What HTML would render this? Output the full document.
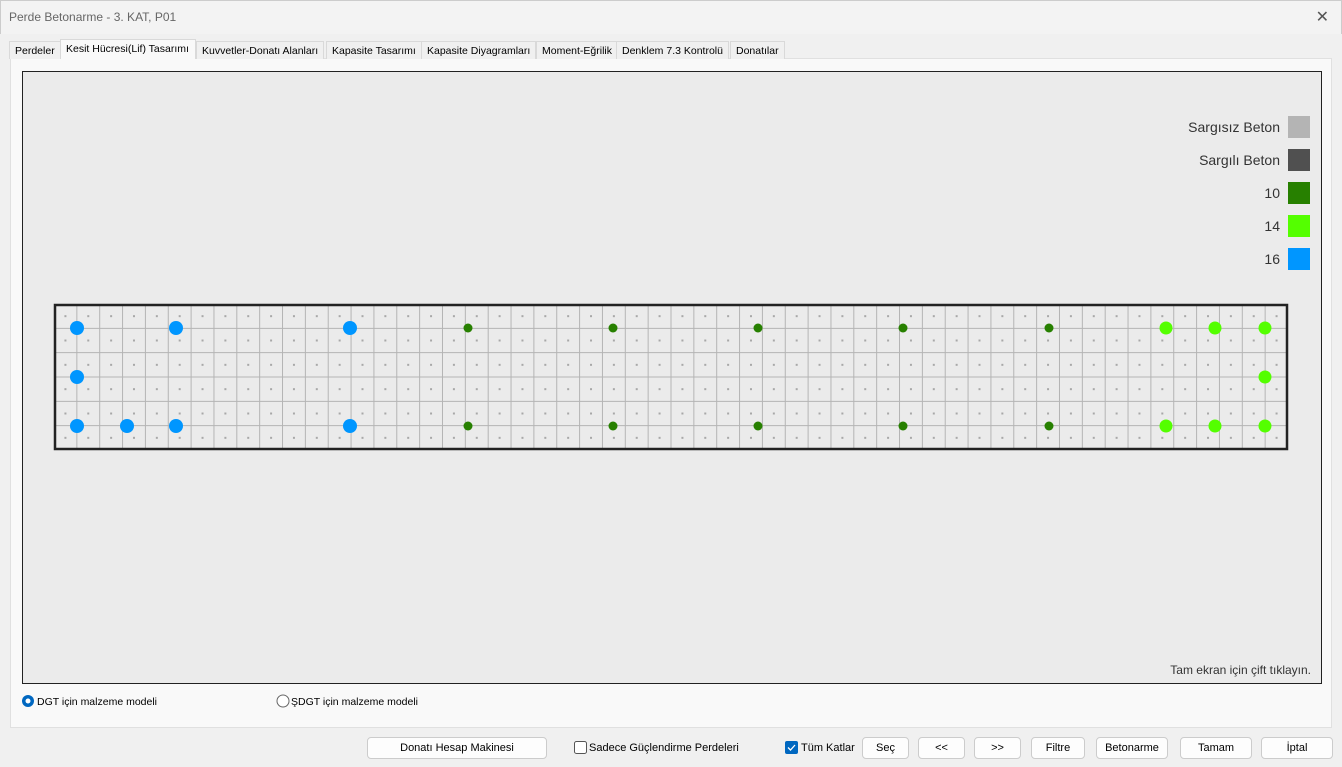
<!DOCTYPE html>
<html><head><meta charset="utf-8"><style>
*{margin:0;padding:0;box-sizing:border-box}
body{width:1342px;height:767px;background:#f0f0f0;font-family:"Liberation Sans","DejaVu Sans",sans-serif;font-size:11px;color:#000;position:relative;overflow:hidden}
.title{position:absolute;left:0;top:0;width:1342px;height:34px;background:#f3f3f3;border:1px solid #ccc;border-bottom:none}
.title span{position:absolute;left:8px;top:9px;font-size:12px;color:#666}
.title .x{left:auto;right:12px;top:6px;font-size:16px;color:#555}
.tabs{position:absolute;left:9px;top:39px;height:20px}
.tab{position:absolute;top:2px;height:18px;border:1px solid #d9d9d9;border-bottom:none;background:#f0f0f0;padding:3px 5px 0;white-space:nowrap;font-size:10.5px}
.tab.sel{top:0;height:20px;background:#f9f9f9;padding-top:3px}
.panel{position:absolute;left:10px;top:58px;width:1322px;height:670px;background:#f9f9f9;border:1px solid #e0e0e0}
.btn{position:absolute;top:737px;height:22px;border:1px solid #ccc;border-radius:4px;background:#fdfdfd;text-align:center;line-height:20px;font-size:11px}
</style></head><body>
<div class="title"><span>Perde Betonarme - 3. KAT, P01</span><span class="x">✕</span></div>
<div class="panel"></div>
<div class="tabs">
<div class="tab" style="left:0">Perdeler</div>
<div class="tab sel" style="left:51px;width:136px">Kesit Hücresi(Lif) Tasarımı</div>
<div class="tab" style="left:187px">Kuvvetler-Donatı Alanları</div>
<div class="tab" style="left:317px">Kapasite Tasarımı</div>
<div class="tab" style="left:412px">Kapasite Diyagramları</div>
<div class="tab" style="left:527px">Moment-Eğrilik</div>
<div class="tab" style="left:607px">Denklem 7.3 Kontrolü</div>
<div class="tab" style="left:721px">Donatılar</div>
</div>
<svg id="s" style="position:absolute;left:0;top:0" width="1342" height="767" font-family="Liberation Sans, sans-serif">
<rect x="22.5" y="71.5" width="1299" height="612" fill="#ebebeb" stroke="#222"/>
<g font-size="14" fill="#333" text-anchor="end">
<text x="1280" y="132">Sargısız Beton</text><rect x="1288" y="116" width="22" height="22" fill="#b4b4b4"/>
<text x="1280" y="165">Sargılı Beton</text><rect x="1288" y="149" width="22" height="22" fill="#505050"/>
<text x="1280" y="198">10</text><rect x="1288" y="182" width="22" height="22" fill="#278000"/>
<text x="1280" y="231">14</text><rect x="1288" y="215" width="22" height="22" fill="#54ff00"/>
<text x="1280" y="264">16</text><rect x="1288" y="248" width="22" height="22" fill="#0096ff"/>
<text x="1311" y="674" font-size="12">Tam ekran için çift tıklayın.</text>
</g>
<g id="g"></g>
<rect x="55" y="305" width="1232" height="144" fill="none" stroke="#222" stroke-width="2.5"/>
<circle cx="28" cy="701" r="6" fill="#0067c0"/><circle cx="28" cy="701" r="2.5" fill="#fff"/>
<text x="37" y="705" font-size="10.5">DGT için malzeme modeli</text>
<circle cx="283" cy="701" r="6" fill="#fff" stroke="#666"/>
<text x="291" y="705" font-size="10.5">ŞDGT için malzeme modeli</text>
<rect x="574.5" y="741.5" width="12" height="12" rx="2" fill="#fff" stroke="#555"/>
<text x="589" y="751" font-size="11">Sadece Güçlendirme Perdeleri</text>
<rect x="785" y="741" width="13" height="13" rx="2" fill="#0067c0"/>
<path d="M788 747.5l2.5 2.5 4.5-5" stroke="#fff" fill="none" stroke-width="1.3"/>
<text x="801" y="751" font-size="11">Tüm Katlar</text>
</svg>
<div class="btn" style="left:367px;width:180px">Donatı Hesap Makinesi</div>
<div class="btn" style="left:862px;width:47px">Seç</div>
<div class="btn" style="left:918px;width:47px">&lt;&lt;</div>
<div class="btn" style="left:974px;width:47px">&gt;&gt;</div>
<div class="btn" style="left:1031px;width:54px">Filtre</div>
<div class="btn" style="left:1096px;width:72px">Betonarme</div>
<div class="btn" style="left:1180px;width:72px">Tamam</div>
<div class="btn" style="left:1261px;width:72px">İptal</div>
<script>
var g=document.getElementById('g'),h='';
var x0=54,x1=1288,y0=304,y1=450,n=54,w=(x1-x0)/n,rh=(y1-y0)/6;
h+='<rect x="'+x0+'" y="'+y0+'" width="'+(x1-x0)+'" height="'+(y1-y0)+'" fill="#ebebeb"/>';
for(var i=1;i<n;i++){var x=x0+i*w;h+='<line x1="'+x+'" y1="'+y0+'" x2="'+x+'" y2="'+y1+'" stroke="#b4b4b4"/>';}
for(var j=1;j<6;j++){var y=y0+j*rh;h+='<line x1="'+x0+'" y1="'+y+'" x2="'+x1+'" y2="'+y+'" stroke="#b4b4b4"/>';}
for(var i=0;i<n;i++)for(var j=0;j<6;j++){h+='<rect x="'+(x0+(i+0.5)*w-1)+'" y="'+(y0+(j+0.5)*rh-1)+'" width="2" height="2" fill="#a8a8a8"/>';}
function c(x,y,r,f){h+='<circle cx="'+x+'" cy="'+y+'" r="'+r+'" fill="'+f+'"/>';}
var B='#0096ff',D='#278000',L='#54ff00';
[77,176,350].forEach(function(x){c(x,328,7,B);});
[77,127,176,350].forEach(function(x){c(x,426,7,B);});c(77,377,7,B);
[468,613,758,903,1049].forEach(function(x){c(x,328,4.5,D);c(x,426,4.5,D);});
[1166,1215,1265].forEach(function(x){c(x,328,6.5,L);c(x,426,6.5,L);});c(1265,377,6.5,L);
g.innerHTML=h;
</script>
</body></html>
